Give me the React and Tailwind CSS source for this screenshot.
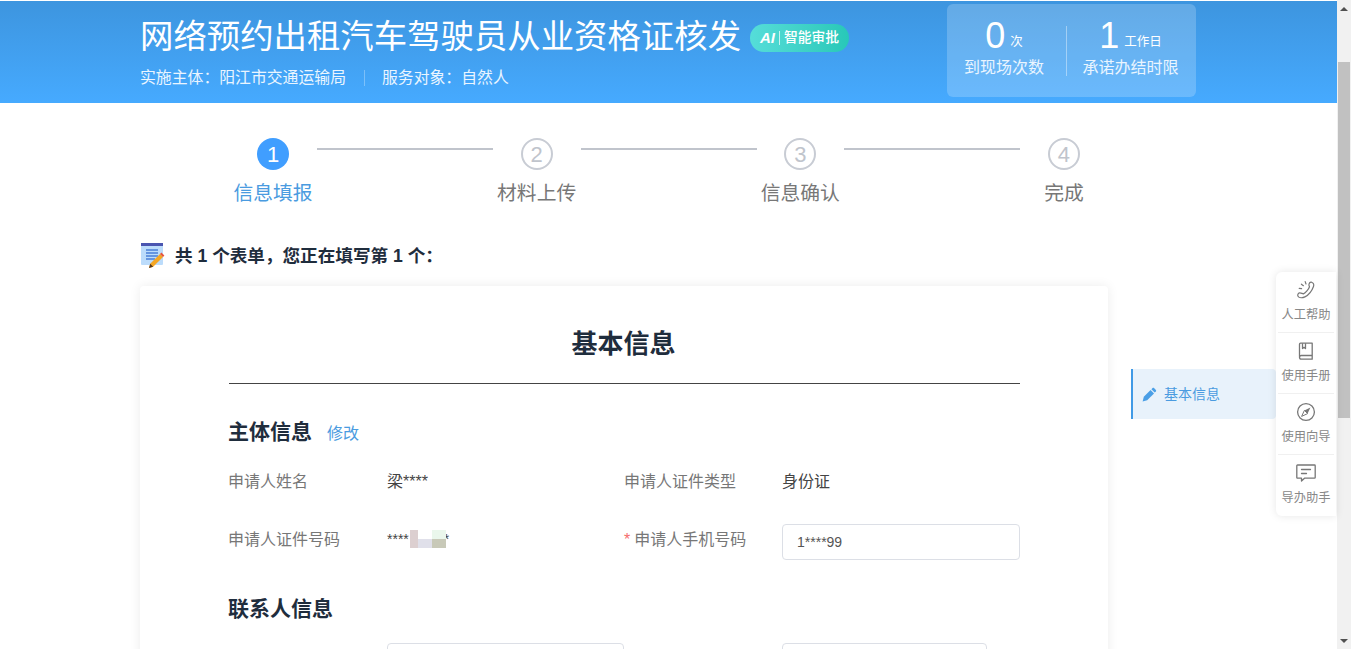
import React from 'react'

const steps = [
  { no: 1, label: '信息填报', active: true },
  { no: 2, label: '材料上传' },
  { no: 3, label: '信息确认' },
  { no: 4, label: '完成' },
]

const PhoneIcon = () => (
  <svg width="20" height="20" viewBox="0 0 20 20" fill="none" stroke="#777" strokeWidth="1.2" strokeLinecap="round" strokeLinejoin="round">
    <path d="M15.5 2.2c1.8.6 2.8 2 2 4.3-1.3 3.5-4.6 8.4-8.6 10.4-2.2 1.1-5.8 1.4-6.9-.7-.7-1.3 0-3 1.6-3.3 1.4-.2 2.4.7 3.8 1 2.2-.9 5.2-4.6 6.1-7.2-.3-.8-.9-1.5-.5-2.6.3-1 1.4-2.2 2.5-1.9z" />
    <path d="M9.2 1.6l.8 2.4M5.4 4.2l2 1.5M3.2 8.4l2.4.3" />
  </svg>
)

const BookIcon = () => (
  <svg width="20" height="20" viewBox="0 0 20 20" fill="none" stroke="#777" strokeWidth="1.3" strokeLinejoin="round">
    <path d="M3.5 15.5V3.2c0-.6.4-1 1-1h11.7v16H5.4c-1 0-1.9-.8-1.9-1.9 0-1 .9-1.8 1.9-1.8h10.8" />
    <path d="M6.5 2.2v5.3l1.5-1.2 1.5 1.2V2.2" />
  </svg>
)

const CompassIcon = () => (
  <svg width="20" height="20" viewBox="0 0 20 20" fill="none">
    <circle cx="10" cy="10" r="8.4" stroke="#777" strokeWidth="1.3" />
    <path d="M14.4 5.6L11.6 11.6 8.4 8.4z" fill="#777" />
    <path d="M5.6 14.4L8.4 8.4 11.6 11.6z" stroke="#777" strokeWidth="1" strokeLinejoin="round" />
  </svg>
)

const ChatIcon = () => (
  <svg width="22" height="20" viewBox="0 0 22 20" fill="none" stroke="#777" strokeWidth="1.3" strokeLinejoin="round" strokeLinecap="round">
    <path d="M2.5 2h17c.4 0 .7.3.7.7v11.8c0 .4-.3.7-.7.7H9.5l-3 2.8v-2.8h-4c-.4 0-.7-.3-.7-.7V2.7c0-.4.3-.7.7-.7z" />
    <path d="M6.5 6.5h9M6.5 10.5h5" />
  </svg>
)

const PencilIcon = () => (
  <svg width="15" height="15" viewBox="0 0 15 15" fill="#4a9fe6">
    <path d="M10.6 1.1c.4-.4 1-.4 1.4 0l1.9 1.9c.4.4.4 1 0 1.4l-1.2 1.2-3.3-3.3 1.2-1.2z" />
    <path d="M8.6 3L1.8 9.8 .6 14.4l4.6-1.2L12 6.4 8.6 3z" />
  </svg>
)

const FormIcon = () => (
  <svg width="26" height="27" viewBox="0 0 26 27" fill="none">
    <rect x="1" y="1" width="22" height="22" rx="1" fill="#bcdcfb" />
    <rect x="1" y="1" width="22" height="3" fill="#4a55b0" />
    <path d="M6 8h12M6 11h12M6 14h12M6 17h9" stroke="#4a7fd8" strokeWidth="1.4" />
    <path d="M9 26l1.2-4.2L20 12l3 3-9.8 9.8L9 26z" fill="#f5a623" />
    <path d="M20 12l1.4-1.4 3 3L23 15l-3-3z" fill="#e8553c" />
    <path d="M9 26l1.2-4.2 3 3L9 26z" fill="#5a3b20" />
  </svg>
)

const HelpItem = ({ icon, label, last }) => (
  <div className={`flex h-[61px] flex-col items-center pt-[7px] ${last ? '' : 'border-b border-[#f0f0f0]'}`}>
    <div className="flex h-[22px] items-center">{icon}</div>
    <div className="mt-[5px] text-[12.25px] leading-[18px] whitespace-nowrap text-[#888]">{label}</div>
  </div>
)

const Field = ({ label, value, labelWidth }) => (
  <div className="flex h-[36px] items-start">
    <div className={`${labelWidth} pt-[4px] text-[16px] leading-[24px] text-[#777]`}>{label}</div>
    <div className="pt-[4px] text-[16px] leading-[24px] text-[#444]">{value}</div>
  </div>
)

const App = () => {
  return (
    <div className="flex h-screen overflow-hidden bg-white font-['Liberation_Sans','Noto_Sans_CJK_SC',sans-serif]">
      <div className="relative w-[1337px] shrink-0">
        {/* header */}
        <div className="mt-[1px] h-[102px] bg-gradient-to-b from-[#3d95df] to-[#46aaff] pl-[140px]">
          <div className="flex w-[1056px] justify-between">
            <div>
              <div className="mt-[13px] flex items-center">
                <h1 className="text-[33.4px] leading-[46px] font-normal text-white">网络预约出租汽车驾驶员从业资格证核发</h1>
                <div className="mt-[2px] ml-[9px] flex h-[28px] w-[99px] items-center justify-center rounded-full bg-gradient-to-r from-[#55ddd9] to-[#27c8b8] text-white">
                  <span className="text-[15px] font-bold italic">AI</span>
                  <span className="mx-[4px] h-[14px] w-px bg-white/70"></span>
                  <span className="text-[13.75px] font-medium">智能审批</span>
                </div>
              </div>
              <div className="mt-[6px] flex items-center text-[15.85px] leading-[24px] text-[#eaf5ff]">
                <span>实施主体：阳江市交通运输局</span>
                <span className="mr-[17px] ml-[18px] h-[16px] w-px bg-white/30"></span>
                <span>服务对象：自然人</span>
              </div>
            </div>
            <div className="mt-[3px] flex h-[93px] w-[249px] items-center rounded-md bg-white/20 text-white">
              <div className="flex w-[119px] flex-col items-center pr-[5px] pb-[7px]">
                <div className="flex items-center">
                  <span className="text-[36px] leading-[40px]">0</span>
                  <span className="mt-[14px] ml-[5px] text-[12.5px]">次</span>
                </div>
                <div className="text-[16px] leading-[23px] text-[#eaf5ff]">到现场次数</div>
              </div>
              <div className="h-[50px] w-px bg-white/40"></div>
              <div className="flex flex-1 flex-col items-center pr-[2px] pb-[7px]">
                <div className="flex items-center">
                  <span className="text-[36px] leading-[40px]">1</span>
                  <span className="mt-[14px] ml-[5px] text-[12.5px]">工作日</span>
                </div>
                <div className="text-[16px] leading-[23px] text-[#eaf5ff]">承诺办结时限</div>
              </div>
            </div>
          </div>
        </div>

        {/* steps */}
        <div className="mt-[35px] flex pl-[233px]">
          {steps.map((s, i) => (
            <React.Fragment key={s.no}>
              <div className="flex w-[80px] flex-col items-center">
                <div className={`flex h-[32px] w-[32px] items-center justify-center rounded-full text-[22px] ${s.active ? 'bg-[#409eff] text-white' : 'border-2 border-[#c8ccd4] text-[#c0c4cc]'}`}>
                  {s.no}
                </div>
                <div className={`mt-[8px] whitespace-nowrap text-[19.8px] leading-[30px] ${s.active ? 'text-[#4a9be0]' : 'text-[#777]'}`}>{s.label}</div>
              </div>
              {i < 3 && <div className="mt-[10px] mr-[3.67px] ml-[4px] h-[2px] w-[176px] bg-[#c0c4cc]"></div>}
            </React.Fragment>
          ))}
        </div>

        {/* form hint */}
        <div className="mt-[34px] flex items-center pl-[140px]">
          <FormIcon />
          <span className="ml-[9px] text-[17.6px] leading-[26px] font-bold text-[#1f2d3d]">共 1 个表单，您正在填写第 1 个：</span>
        </div>

        <div className="mt-[17px] flex pl-[140px]">
          {/* card */}
          <div className="h-[500px] w-[968px] shrink-0 rounded-sm bg-white px-[88px] pt-[39px] shadow-[0_0_12px_rgba(0,0,0,0.08)]">
            <h2 className="ml-[1px] h-[59px] border-b border-[#444] pr-[2px] text-center text-[26px] leading-[38px] font-bold text-[#1f2d3d]">基本信息</h2>
            <div className="mt-[33px] flex items-center">
              <h3 className="text-[21px] leading-[30px] font-bold text-[#1f2d3d]">主体信息</h3>
              <span className="mt-[3px] ml-[15px] text-[16px] text-[#4a9be0]">修改</span>
            </div>
            <div className="mt-[19px] grid grid-cols-[396px_1fr] gap-y-[22px]">
              <Field label="申请人姓名" value="梁****" labelWidth="w-[159px]" />
              <Field label="申请人证件类型" value="身份证" labelWidth="w-[158px]" />
              <div className="flex h-[36px] items-start">
                <div className="w-[159px] pt-[4px] text-[16px] leading-[24px] text-[#777]">申请人证件号码</div>
                <div className="relative pt-[3px] text-[14px] leading-[24px] text-[#444]">
                  ****<span className="ml-[35px]">*</span>
                  {/* mosaic over the ID number */}
                  <div className="absolute top-[6px] left-[23px] grid h-[18px] w-[36px] grid-cols-[8px_14px_14px] grid-rows-2">
                    <div className="row-span-2 bg-[#dccfd0]"></div>
                    <div className="bg-white"></div>
                    <div className="bg-[#eaf7ec]"></div>
                    <div className="bg-[#e0e0ea]"></div>
                    <div className="bg-[#c8c9b8]"></div>
                  </div>
                </div>
              </div>
              <div className="flex h-[36px] items-start">
                <div className="w-[158px] pt-[4px] text-[16px] leading-[24px] text-[#777]">
                  <span className="mr-[4px] text-[#f56c6c]">*</span>申请人手机号码
                </div>
                <div className="flex h-[36px] w-[238px] items-center rounded border border-[#dcdfe6] px-[14px] text-[14px] text-[#555]">1****99</div>
              </div>
            </div>
            <h3 className="mt-[34px] text-[21px] leading-[30px] font-bold text-[#1f2d3d]">联系人信息</h3>
            <div className="mt-[19px] grid grid-cols-[396px_1fr]">
              <div className="pl-[159px]">
                <div className="h-[36px] w-[237px] rounded border border-[#dcdfe6]"></div>
              </div>
              <div className="pl-[158px]">
                <div className="h-[36px] w-[205px] rounded border border-[#dcdfe6]"></div>
              </div>
            </div>
          </div>

          {/* side nav */}
          <div className="mt-[83px] ml-[23px] flex h-[50px] w-[145px] items-center rounded-r border-l-[2px] border-[#409ae6] bg-[#e8f2fb] pl-[9px] text-[14px] text-[#4a9be0]">
            <PencilIcon />
            <span className="ml-[7px]">基本信息</span>
          </div>
        </div>

        {/* help panel */}
        <div className="absolute top-[272px] right-[1px] w-[60px] rounded-l-md bg-white px-[2px] shadow-[0_0_8px_rgba(0,0,0,0.1)]">
          <HelpItem icon={<PhoneIcon />} label="人工帮助" />
          <HelpItem icon={<BookIcon />} label="使用手册" />
          <HelpItem icon={<CompassIcon />} label="使用向导" />
          <HelpItem icon={<ChatIcon />} label="导办助手" last />
        </div>
      </div>

      {/* scrollbar */}
      <div className="flex w-[14px] flex-col items-center bg-[#f1f1f1]">
        <div className="mt-[7px] h-0 w-0 border-x-[4px] border-b-[4px] border-x-transparent border-b-[#505050]"></div>
        <div className="mt-[51px] h-[356px] w-[12px] bg-[#c1c1c1]"></div>
        <div className="mt-auto mb-[6px] h-0 w-0 border-x-[4px] border-t-[4px] border-x-transparent border-t-[#505050]"></div>
      </div>
    </div>
  )
}

export default App
